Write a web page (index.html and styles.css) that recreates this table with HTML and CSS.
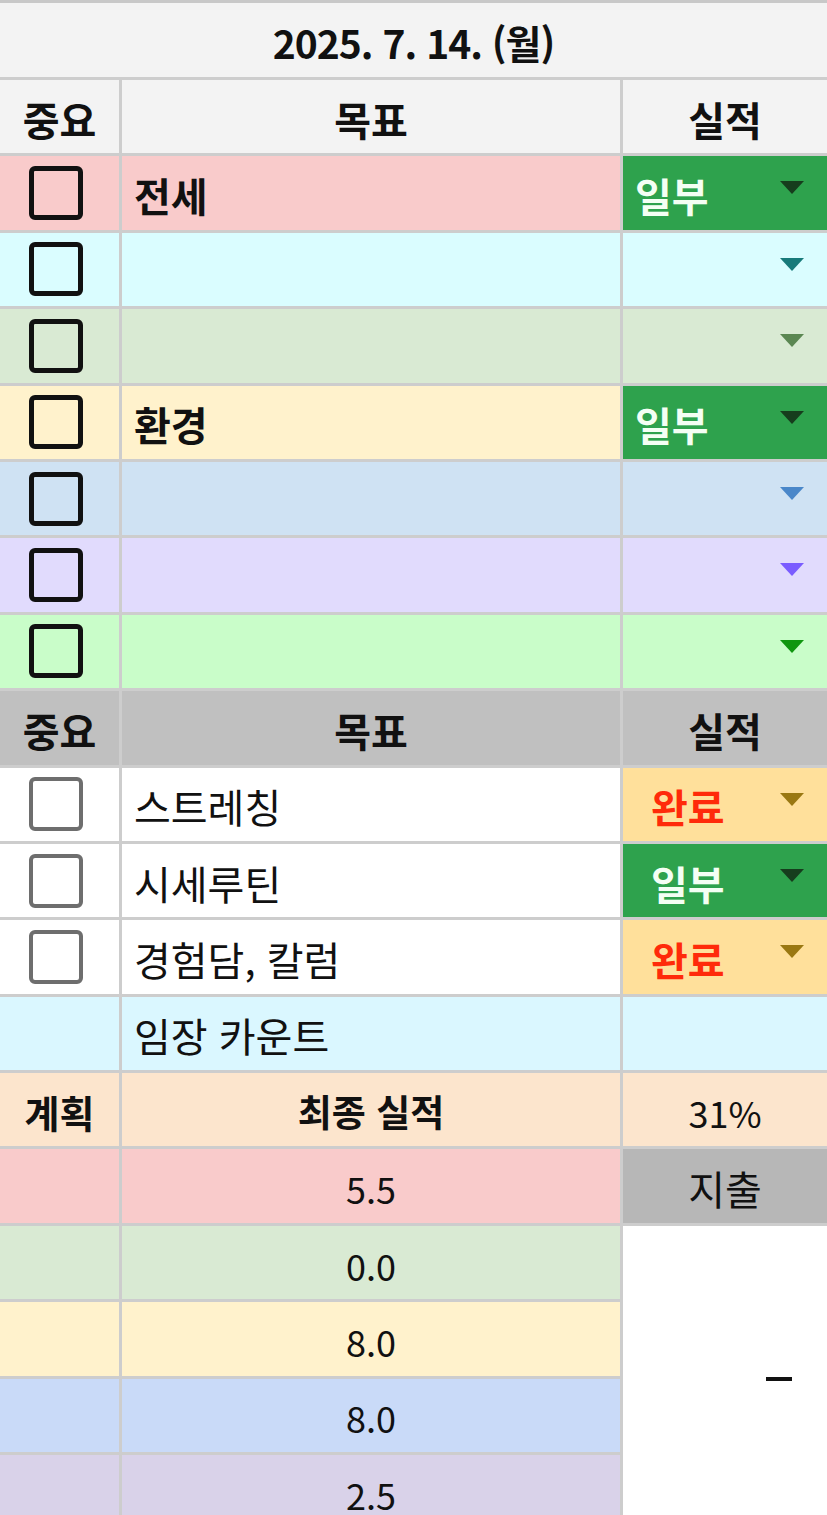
FILE: index.html
```html
<!DOCTYPE html>
<html lang="ko">
<head>
  <meta charset="UTF-8">
  <meta name="viewport" content="width=device-width, initial-scale=1.0">
  <title>2025. 7. 14. (월)</title>
  <link rel="stylesheet" href="styles.css">
</head>
<body>
  <div class="sheet">
    <!-- 날짜 -->
    <div class="cell title full">2025. 7. 14. (월)</div>

    <!-- 첫번째 표 -->
    <div class="cell head">중요</div>
    <div class="cell head">목표</div>
    <div class="cell head">실적</div>

    <div class="cell red center"><span class="box"></span></div>
    <div class="cell red goal bold">전세</div>
    <div class="cell chip green-chip"><span>일부</span><i class="arrow a-dark"></i></div>

    <div class="cell cyan center"><span class="box"></span></div>
    <div class="cell cyan goal"></div>
    <div class="cell cyan chip empty"><i class="arrow a-teal"></i></div>

    <div class="cell sage center"><span class="box"></span></div>
    <div class="cell sage goal"></div>
    <div class="cell sage chip empty"><i class="arrow a-sage"></i></div>

    <div class="cell yellow center"><span class="box"></span></div>
    <div class="cell yellow goal bold">환경</div>
    <div class="cell chip green-chip"><span>일부</span><i class="arrow a-dark"></i></div>

    <div class="cell blue center"><span class="box"></span></div>
    <div class="cell blue goal"></div>
    <div class="cell blue chip empty"><i class="arrow a-blue"></i></div>

    <div class="cell violet center"><span class="box"></span></div>
    <div class="cell violet goal"></div>
    <div class="cell violet chip empty"><i class="arrow a-violet"></i></div>

    <div class="cell mint center"><span class="box"></span></div>
    <div class="cell mint goal"></div>
    <div class="cell mint chip empty"><i class="arrow a-mint"></i></div>

    <!-- 두번째 표 -->
    <div class="cell head gray">중요</div>
    <div class="cell head gray">목표</div>
    <div class="cell head gray">실적</div>

    <div class="cell white center"><span class="box soft"></span></div>
    <div class="cell white goal">스트레칭</div>
    <div class="cell chip lower done"><span>완료</span><i class="arrow a-gold"></i></div>

    <div class="cell white center"><span class="box soft"></span></div>
    <div class="cell white goal">시세루틴</div>
    <div class="cell chip lower green-chip"><span>일부</span><i class="arrow a-dark"></i></div>

    <div class="cell white center"><span class="box soft"></span></div>
    <div class="cell white goal">경험담, 칼럼</div>
    <div class="cell chip lower done"><span>완료</span><i class="arrow a-gold"></i></div>

    <div class="cell sky"></div>
    <div class="cell sky goal">임장 카운트</div>
    <div class="cell sky"></div>

    <!-- 계획 / 최종 실적 -->
    <div class="cell peach center bold small">계획</div>
    <div class="cell peach center bold medium">최종 실적</div>
    <div class="cell peach center num">31%</div>

    <div class="cell red"></div>
    <div class="cell red center num">5.5</div>
    <div class="cell spend center">지출</div>

    <div class="cell sage"></div>
    <div class="cell sage center num">0.0</div>
    <div class="cell white dash-cell"><span class="dash"></span></div>

    <div class="cell yellow"></div>
    <div class="cell yellow center num">8.0</div>

    <div class="cell cornflower"></div>
    <div class="cell cornflower center num">8.0</div>

    <div class="cell lilac"></div>
    <div class="cell lilac center num">2.5</div>
  </div>
</body>
</html>
```

FILE: styles.css
```css
/* 스프레드시트 모양 그대로 */
body {
  margin: 0;
  background: #fff;
  font-family: "Noto Sans CJK KR", "Noto Sans", sans-serif;
  color: #111;
}

.sheet {
  display: grid;
  grid-template-columns: 119px 498px 1fr;
  grid-template-rows: 74px;
  grid-auto-rows: 73.4px;
  gap: 3px;
  background: #cdcdcd;
  border-top: 3px solid #c8c8c8;
  overflow: hidden;
}

.cell {
  display: flex;
  align-items: center;
  font-size: 40px;
  line-height: 1;
  padding-top: 4px;
  background: #fff;
  min-width: 0;
}

.full { grid-column: 1 / -1; }
.center { justify-content: center; }
.bold { font-weight: 700; }
.small { font-size: 38px; }
.medium { font-size: 37px; }
.num { font-size: 36px; }

.title {
  justify-content: center;
  background: #f3f3f3;
  font-weight: 700;
  font-size: 39px;
  letter-spacing: -1px;
}

.head {
  justify-content: center;
  background: #f3f3f3;
  font-weight: 700;
}

.goal { padding-left: 12px; }

/* 행 색상 */
.red { background: #f9cbcb; }
.cyan { background: #dafdff; }
.sage { background: #d9ead3; }
.yellow { background: #fff2cc; }
.blue { background: #cfe2f3; }
.violet { background: #e1dbfd; }
.mint { background: #c9fdc9; }
.gray { background: #c0c0c0; }
.white { background: #fff; }
.sky { background: #daf7ff; }
.peach { background: #fce5cd; }
.cornflower { background: #c9daf8; }
.lilac { background: #d9d2e9; }
.spend { background: #b7b7b7; }

/* 체크박스 */
.box {
  width: 44px;
  height: 44px;
  border: 5px solid #111;
  border-radius: 6px;
  margin: -4px 8px 0 0;
}

.box.soft {
  border: 4px solid #6e6e6e;
  width: 46px;
  height: 46px;
}

/* 드롭다운 칩 */
.chip {
  justify-content: space-between;
  padding: 4px 23px 0 12px;
  font-weight: 700;
}

.chip.lower { padding-left: 28px; }
.chip.empty { justify-content: flex-end; }

.green-chip { background: #2ea24d; color: #f4fff4; }
.done { background: #ffe09b; color: #ff2a0a; }

.arrow {
  align-self: flex-start;
  margin-top: 21px;
  width: 0;
  height: 0;
  border-left: 12px solid transparent;
  border-right: 12px solid transparent;
  border-top: 13px solid #173f1f;
}

.a-dark { border-top-color: #163d1d; }
.a-teal { border-top-color: #177a7a; }
.a-sage { border-top-color: #5b8752; }
.a-blue { border-top-color: #4a87c9; }
.a-violet { border-top-color: #7a5cff; }
.a-mint { border-top-color: #0f960f; }
.a-gold { border-top-color: #9a7812; }

/* 지출 아래 병합 셀 */
.dash-cell {
  grid-row: span 4;
  justify-content: flex-end;
  padding-right: 35px;
}

.dash {
  width: 26px;
  height: 4px;
  background: #111;
}
```
